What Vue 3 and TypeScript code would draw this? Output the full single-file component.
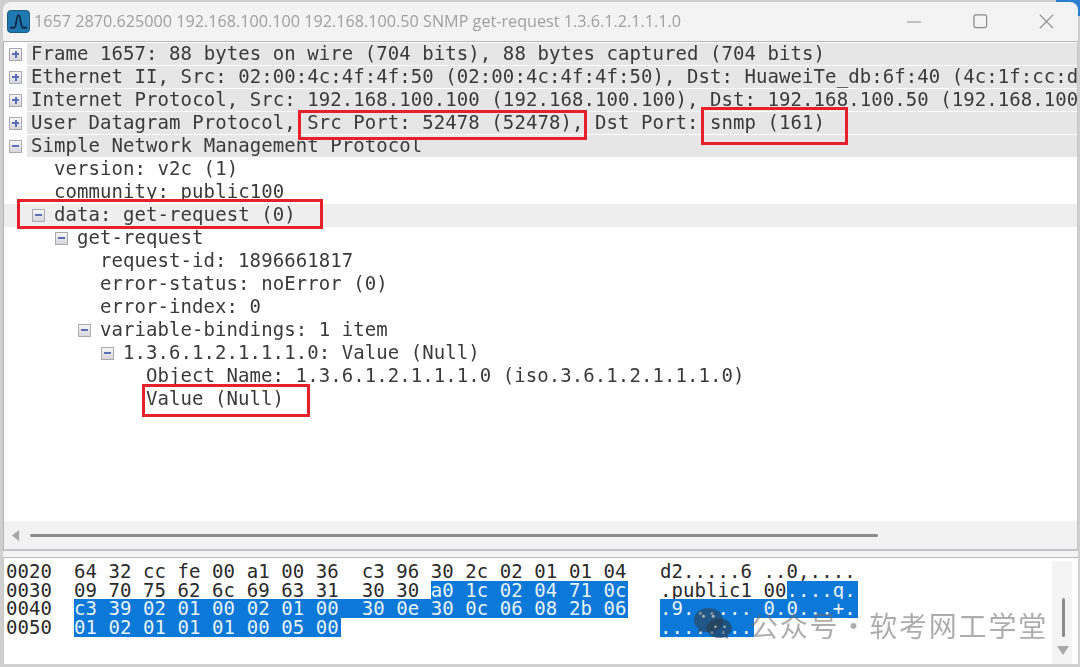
<script setup lang="ts">
interface TreeRow {
  level: number
  text: string
  expander?: 'plus' | 'minus'
  shaded?: boolean
  active?: boolean
}

interface HexRow {
  offset: string
  hex: string
  hexSel: string
  ascii: string
  asciiSel: string
}

const rows: TreeRow[] = [
  { level: 0, expander: 'plus', shaded: true, text: 'Frame 1657: 88 bytes on wire (704 bits), 88 bytes captured (704 bits)' },
  { level: 0, expander: 'plus', shaded: true, text: 'Ethernet II, Src: 02:00:4c:4f:4f:50 (02:00:4c:4f:4f:50), Dst: HuaweiTe_db:6f:40 (4c:1f:cc:db:6f:40)' },
  { level: 0, expander: 'plus', shaded: true, text: 'Internet Protocol, Src: 192.168.100.100 (192.168.100.100), Dst: 192.168.100.50 (192.168.100.50)' },
  { level: 0, expander: 'plus', shaded: true, text: 'User Datagram Protocol, Src Port: 52478 (52478), Dst Port: snmp (161)' },
  { level: 0, expander: 'minus', shaded: true, text: 'Simple Network Management Protocol' },
  { level: 1, text: 'version: v2c (1)' },
  { level: 1, text: 'community: public100' },
  { level: 1, expander: 'minus', active: true, text: 'data: get-request (0)' },
  { level: 2, expander: 'minus', text: 'get-request' },
  { level: 3, text: 'request-id: 1896661817' },
  { level: 3, text: 'error-status: noError (0)' },
  { level: 3, text: 'error-index: 0' },
  { level: 3, expander: 'minus', text: 'variable-bindings: 1 item' },
  { level: 4, expander: 'minus', text: '1.3.6.1.2.1.1.1.0: Value (Null)' },
  { level: 5, text: 'Object Name: 1.3.6.1.2.1.1.1.0 (iso.3.6.1.2.1.1.1.0)' },
  { level: 5, text: 'Value (Null)' },
]

const hexRows: HexRow[] = [
  { offset: '0020', hex: '64 32 cc fe 00 a1 00 36  c3 96 30 2c 02 01 01 04', hexSel: '', ascii: 'd2.....6 ..0,....', asciiSel: '' },
  { offset: '0030', hex: '09 70 75 62 6c 69 63 31  30 30 ', hexSel: 'a0 1c 02 04 71 0c', ascii: '.public1 00', asciiSel: '....q.' },
  { offset: '0040', hex: '', hexSel: 'c3 39 02 01 00 02 01 00  30 0e 30 0c 06 08 2b 06', ascii: '', asciiSel: '.9...... 0.0...+.' },
  { offset: '0050', hex: '', hexSel: '01 02 01 01 01 00 05 00', ascii: '', asciiSel: '........' },
]

const marks = [
  { name: 'src', left: 298, top: 110, width: 289, height: 30 },
  { name: 'dst', left: 701, top: 107, width: 147, height: 38 },
  { name: 'data', left: 17, top: 199, width: 306, height: 30 },
  { name: 'value', left: 142, top: 384, width: 168, height: 33 },
]
</script>

<template>
  <div class="page">
    <div class="corner" />
    <div class="window">
      <header class="titlebar">
        <svg class="app-icon" viewBox="0 0 24 24" aria-hidden="true">
          <rect x="0.5" y="0.5" width="23" height="23" rx="3.5" fill="#1f78b0" stroke="#14567f" />
          <path d="M3 18.500 H7.500 C10 18.500 9.500 5.500 12 5.500 C14.500 5.500 14 18.500 16.500 18.500 H21" fill="none" stroke="#0c2b45" stroke-width="2" />
        </svg>
        <span class="title">1657 2870.625000 192.168.100.100 192.168.100.50 SNMP get-request 1.3.6.1.2.1.1.1.0</span>
        <div class="controls">
          <svg viewBox="0 0 16 16" aria-hidden="true"><path d="M0 8.500 H15" stroke="#999" stroke-width="1.200" /></svg>
          <svg viewBox="0 0 16 16" aria-hidden="true"><rect x="1" y="1" width="13.500" height="13.500" rx="2" fill="none" stroke="#888" stroke-width="1.300" /></svg>
          <svg viewBox="0 0 16 16" aria-hidden="true"><path d="M1 1 L15 15 M15 1 L1 15" stroke="#888" stroke-width="1.300" /></svg>
        </div>
      </header>

      <section class="tree">
        <div class="rows">
          <div
            v-for="row in rows"
            :key="row.text"
            class="row"
            :class="{ active: row.active }"
            :style="{ paddingLeft: row.level * 23 + 'px' }"
          >
            <span class="slot">
              <span v-if="row.expander" class="box">
                <i class="bar" />
                <i v-if="row.expander === 'plus'" class="bar vertical" />
              </span>
            </span>
            <span class="label" :class="{ shaded: row.shaded }">{{ row.text }}</span>
          </div>
        </div>
        <div class="hscroll">
          <svg class="left-arrow" viewBox="0 0 10 12" aria-hidden="true"><path d="M1 6 L9 0 V12 Z" fill="#a8a8a8" /></svg>
          <div class="hthumb" />
        </div>
      </section>

      <section class="hex">
        <div class="hex-rows">
          <div v-for="r in hexRows" :key="r.offset" class="hex-row">
            <span class="offset">{{ r.offset }}</span>
            <span class="bytes">{{ r.hex }}<span v-if="r.hexSel" class="sel">{{ r.hexSel }}</span></span>
            <span class="ascii">{{ r.ascii }}<span v-if="r.asciiSel" class="sel">{{ r.asciiSel }}</span></span>
          </div>
        </div>
        <div class="vscroll">
          <div class="vthumb" />
          <svg class="down-arrow" viewBox="0 0 12 9" aria-hidden="true"><path d="M0 0 H12 L6 9 Z" fill="#a8a8a8" /></svg>
        </div>
      </section>
    </div>

    <div
      v-for="m in marks"
      :key="m.name"
      class="mark"
      :style="{ left: m.left + 'px', top: m.top + 'px', width: m.width + 'px', height: m.height + 'px' }"
    />

    <div class="watermark">
      <svg class="wechat" viewBox="0 0 52 42" aria-hidden="true">
        <path d="M21 1 C10 1 1 8 1 17 C1 22 4 26 8 29 L6 35 L13 32 C15 33 18 33 21 33 C32 33 40 26 40 17 C40 8 32 1 21 1 Z" fill="rgba(50,60,70,.55)" />
        <path d="M36 15 C26 15 18 21 18 28.500 C18 35 26 41 36 41 C38 41 40 41 42 40 L47 42 L46 37 C49 35 52 32 52 28.500 C52 21 45 15 36 15 Z" fill="rgba(40,55,70,.6)" />
        <circle cx="14" cy="12" r="2" fill="rgba(230,220,200,.7)" />
        <circle cx="27" cy="12" r="2" fill="rgba(230,220,200,.7)" />
        <circle cx="30" cy="26" r="1.700" fill="rgba(230,220,200,.7)" />
        <circle cx="42" cy="26" r="1.700" fill="rgba(230,220,200,.7)" />
      </svg>
      <span class="wm-text">公众号·软考网工学堂</span>
    </div>
  </div>
</template>

<style scoped>
.page {
  position: relative;
  box-sizing: border-box;
  width: 1080px;
  height: 667px;
  padding: 2px 2px 3px 3px;
  background-color: #cfcfcf;
  overflow: hidden;
}

.corner {
  position: absolute;
  top: 0;
  right: 0;
  width: 24px;
  height: 16px;
  background: #2a7fd0;
}

.window {
  position: relative;
  box-sizing: border-box;
  display: flex;
  flex-direction: column;
  height: 100%;
  background: #f3f3f3;
  border-radius: 8px 8px 0 0;
  filter: blur(0.35px);
  overflow: hidden;
}

.titlebar {
  flex: none;
  display: flex;
  align-items: center;
  box-sizing: border-box;
  height: 39px;
  padding: 0 0 1px 4px;
}

.app-icon {
  flex: none;
  width: 23px;
  height: 23px;
}

.title {
  flex: 1;
  margin-left: 4px;
  font-family: "Open Sans", "Noto Sans", sans-serif;
  font-size: 16.200px;
  color: #a0a0a0;
  white-space: nowrap;
}

.controls {
  flex: none;
  display: flex;
  align-items: center;
  gap: 51px;
  padding-right: 24px;
}

.controls svg {
  width: 15px;
  height: 15px;
}

.tree {
  flex: none;
  box-sizing: border-box;
  height: 510px;
  display: flex;
  flex-direction: column;
  background: #fff;
  border-top: 1px solid #b4b4b4;
  border-left: 1px solid #b4b4b4;
  border-right: 1px solid #c8c8c8;
  border-bottom: 2px solid #c4c4c8;
  font-family: "DejaVu Sans Mono", "Liberation Mono", monospace;
  font-size: 19px;
  color: #3a3a3a;
}

.rows {
  flex: 1;
  padding-top: 1px;
  overflow: hidden;
}

.row {
  display: flex;
  box-sizing: border-box;
  height: 23px;
  line-height: 20px;
}

.row.active {
  background: #eeeeee;
}

.slot {
  flex: none;
  display: flex;
  align-items: center;
  width: 23px;
  height: 22px;
  padding-left: 5px;
  box-sizing: border-box;
}

.box {
  position: relative;
  display: block;
  box-sizing: border-box;
  width: 13px;
  height: 13px;
  border: 1px solid #a9a9b0;
  background: linear-gradient(#f6f6f8, #d6d6dc);
}

.bar {
  position: absolute;
  left: 2px;
  top: 4.500px;
  width: 7px;
  height: 2px;
  background: #5a6fb8;
}

.bar.vertical {
  left: 4.500px;
  top: 2px;
  width: 2px;
  height: 7px;
}

.label {
  flex: 1;
  min-width: 0;
  height: 22px;
  padding-left: 4px;
  white-space: pre;
  overflow: hidden;
  letter-spacing: 0.07px;
}

.label.shaded {
  background: #e6e6e6;
}

.hscroll {
  flex: none;
  position: relative;
  display: flex;
  align-items: center;
  height: 28px;
  background: #f2f2f2;
  padding-left: 7px;
}

.left-arrow {
  width: 9px;
  height: 11px;
}

.hthumb {
  margin-left: 10px;
  width: 848px;
  height: 3px;
  background: #8c8c8c;
  border-radius: 2px;
}

.hex {
  flex: 1;
  min-height: 0;
  margin-top: 6px;
  display: flex;
  background: #fff;
  border-top: 1px solid #b9b9bd;
  border-left: 1px solid #c8c8c8;
  font-family: "DejaVu Sans Mono", "Liberation Mono", monospace;
  font-size: 19px;
  letter-spacing: 0.07px;
  color: #2a2a2a;
}

.hex-rows {
  flex: 1;
  padding-top: 4px;
}

.hex-row {
  display: flex;
  height: 18.670px;
  line-height: 18.670px;
  white-space: pre;
}

.offset {
  flex: none;
  width: 69px;
  padding-left: 2px;
  box-sizing: border-box;
}

.bytes {
  flex: none;
  width: 587px;
  padding-left: 1px;
  box-sizing: border-box;
}

.ascii {
  flex: none;
}

.sel {
  display: inline-block;
  height: 18.670px;
  background: #0c78d8;
  color: #e8f2fb;
  padding-right: 2px;
}

.vscroll {
  flex: none;
  position: relative;
  width: 20px;
  background: #f4f4f4;
  margin: 3px 6px 0 0;
}

.vthumb {
  position: absolute;
  left: 10px;
  top: 37px;
  width: 3px;
  height: 39px;
  background: #8c8c8c;
  border-radius: 2px;
}

.down-arrow {
  position: absolute;
  left: 5px;
  top: 85px;
  width: 12px;
  height: 9px;
}

.mark {
  position: absolute;
  box-sizing: border-box;
  border: 3px solid #e8202c;
}

.watermark {
  position: absolute;
  left: 693px;
  top: 605px;
  display: flex;
  align-items: flex-start;
  gap: 18px;
  white-space: nowrap;
}

.wechat {
  width: 39px;
  height: 32px;
  margin-top: 2px;
}

.wm-text {
  font-family: "Noto Sans CJK SC", "Noto Sans", sans-serif;
  font-size: 28px;
  line-height: 40px;
  letter-spacing: 1.800px;
  color: rgba(105, 105, 105, 0.55);
}
</style>
